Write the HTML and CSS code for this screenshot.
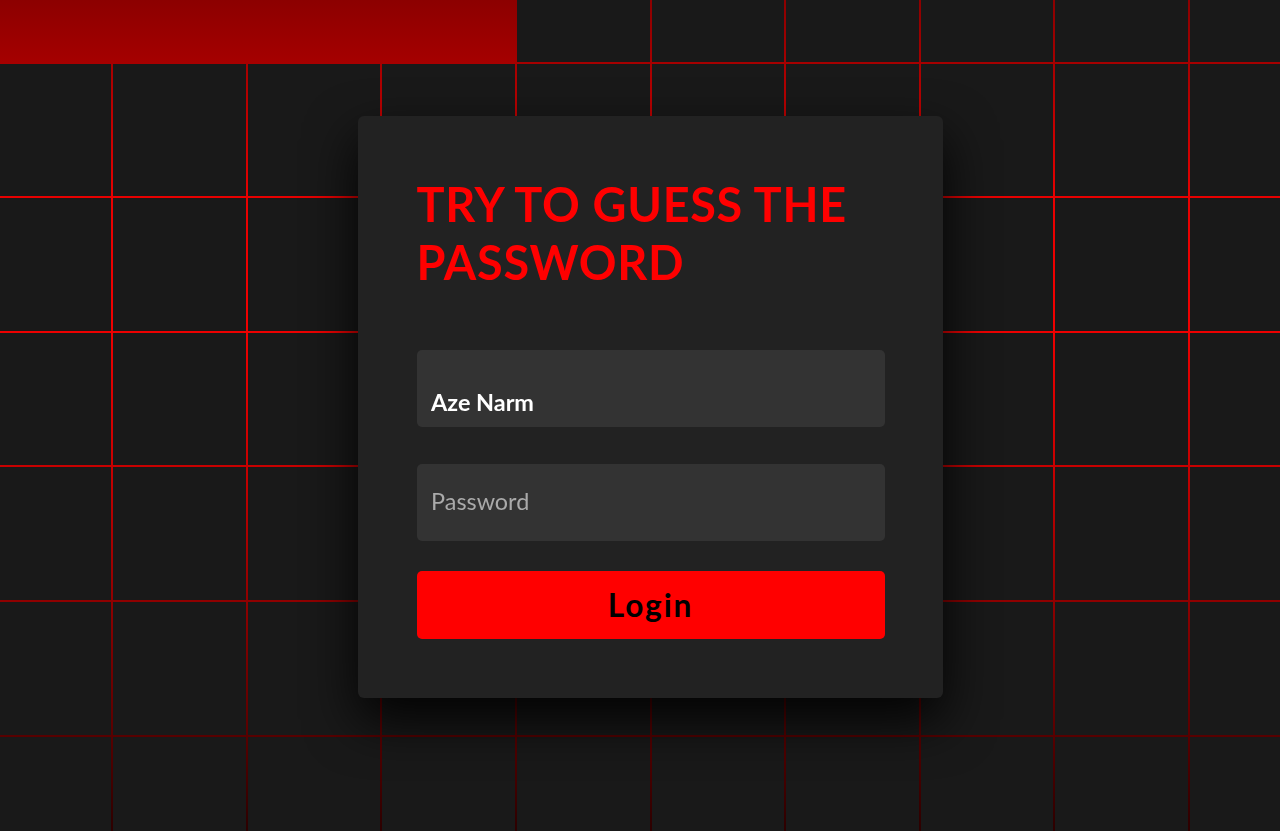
FILE: index.html
```html
<!DOCTYPE html>
<html lang="en">
<head>
<meta charset="utf-8">
<title>Try to guess the password</title>
<link rel="stylesheet" href="styles.css">
</head>
<body>
<section class="backdrop">
  <div class="cells">
    <span class="cell gone"></span><span class="cell gone"></span><span class="cell gone"></span><span class="cell gone"></span><span class="cell"></span><span class="cell"></span><span class="cell"></span><span class="cell"></span><span class="cell"></span><span class="cell"></span>
    <span class="cell"></span><span class="cell"></span><span class="cell"></span><span class="cell"></span><span class="cell"></span><span class="cell"></span><span class="cell"></span><span class="cell"></span><span class="cell"></span><span class="cell"></span>
    <span class="cell"></span><span class="cell"></span><span class="cell"></span><span class="cell"></span><span class="cell"></span><span class="cell"></span><span class="cell"></span><span class="cell"></span><span class="cell"></span><span class="cell"></span>
    <span class="cell"></span><span class="cell"></span><span class="cell"></span><span class="cell"></span><span class="cell"></span><span class="cell"></span><span class="cell"></span><span class="cell"></span><span class="cell"></span><span class="cell"></span>
    <span class="cell"></span><span class="cell"></span><span class="cell"></span><span class="cell"></span><span class="cell"></span><span class="cell"></span><span class="cell"></span><span class="cell"></span><span class="cell"></span><span class="cell"></span>
    <span class="cell"></span><span class="cell"></span><span class="cell"></span><span class="cell"></span><span class="cell"></span><span class="cell"></span><span class="cell"></span><span class="cell"></span><span class="cell"></span><span class="cell"></span>
    <span class="cell"></span><span class="cell"></span><span class="cell"></span><span class="cell"></span><span class="cell"></span><span class="cell"></span><span class="cell"></span><span class="cell"></span><span class="cell"></span><span class="cell"></span>
  </div>
</section>

<div class="signin">
  <div class="content">
    <h2 class="title">Try to guess the password</h2>
    <form class="form" onsubmit="return false">
      <div class="input-box">
        <input class="field field-user" type="text" value="Aze Narm" aria-label="Username">
      </div>
      <div class="input-box">
        <input class="field field-pass" type="password" placeholder="Password" aria-label="Password">
      </div>
      <div class="input-box">
        <button class="submit" type="submit">Login</button>
      </div>
    </form>
  </div>
</div>
</body>
</html>
```

FILE: styles.css
```css
* {
  box-sizing: border-box;
}

html, body {
  margin: 0;
  padding: 0;
  height: 100%;
}

body {
  background: #000;
  font-family: "Lato", "Noto Sans", sans-serif;
  overflow: hidden;
}

.backdrop {
  position: fixed;
  inset: 0;
  overflow: hidden;
  background: linear-gradient(to bottom,
    #8c0000 0px,
    #a40000 60px,
    #e80000 200px,
    #f00000 320px,
    #c80000 466px,
    #900000 600px,
    #580000 735px,
    #2c0000 831px);
}

.cells {
  display: grid;
  grid-template-columns: repeat(10, 132.6px);
  grid-auto-rows: 132.6px;
  gap: 2px;
  margin: -70.9px 0 0 -21.4px;
}

.cell {
  display: block;
  background: #191919;
}

.cell.gone {
  visibility: hidden;
}

.signin {
  position: absolute;
  left: 358px;
  top: 116px;
  width: 585px;
  padding: 58.5px;
  background: #222;
  border-radius: 6px;
  box-shadow: 0 22px 51px rgba(0, 0, 0, 0.9);
  z-index: 10;
}

.content {
  display: flex;
  flex-direction: column;
  gap: 58.5px;
}

.title {
  margin: 0;
  font-size: 46.8px;
  line-height: 58.5px;
  font-weight: 700;
  text-transform: uppercase;
  color: #ff0000;
  letter-spacing: 0.015em;
}

.form {
  display: flex;
  flex-direction: column;
}

.input-box {
  width: 100%;
}

.input-box + .input-box {
  margin-top: 37px;
}

.input-box:last-child {
  margin-top: 30px;
}

.field {
  display: block;
  width: 100%;
  background: #333;
  border: none;
  outline: none;
  border-radius: 5px;
  font-family: "Lato", "Noto Sans", sans-serif;
  font-size: 23.4px;
  line-height: 29px;
  height: 77px;
  color: #fff;
}

.field-user {
  padding: 37px 14.6px 11px;
  font-weight: 700;
}

.field-pass {
  padding: 22px 14.6px 26px;
  font-weight: 400;
}

.field-pass::placeholder {
  color: #aaa;
  opacity: 1;
}

.submit {
  display: block;
  width: 100%;
  height: 68px;
  padding: 15px 14.6px 14px;
  border: none;
  border-radius: 5px;
  background: #ff0000;
  color: #000;
  font-family: "Lato", "Noto Sans", sans-serif;
  font-size: 31.6px;
  line-height: 39px;
  font-weight: 700;
  letter-spacing: 0.06em;
  cursor: pointer;
}
```
